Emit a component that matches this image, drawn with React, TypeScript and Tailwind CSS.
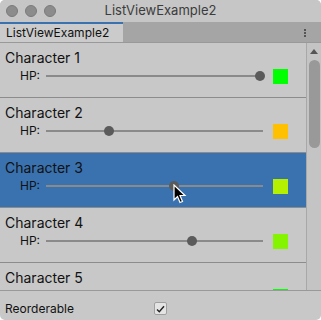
import React from "react";

type Character = {
  name: string;
  hp: number; // 0..1
  color: string;
};

const characters: Character[] = [
  { name: "Character 1", hp: 0.985, color: "#00ff00" },
  { name: "Character 2", hp: 0.29, color: "#ffc000" },
  { name: "Character 3", hp: 0.59, color: "#b4f000" },
  { name: "Character 4", hp: 0.675, color: "#84f400" },
  { name: "Character 5", hp: 1, color: "#00ff00" },
];

export default function App() {
  return (
    <div className="w-[321px] h-[320px] bg-white" style={{ fontFamily: "Inter, 'Noto Sans', sans-serif" }}>
      <div className="relative w-full h-full flex flex-col bg-[#c8c8c8] rounded-[5px] overflow-hidden text-[#111]">
        {/* Title bar */}
        <div className="relative h-[22px] flex items-center bg-[#c6c6c6] px-[6px] gap-[7px]">
          {[0, 1, 2].map((i) => (
            <span key={i} className="w-[12px] h-[12px] rounded-full bg-[#8c8c8c] border border-[#7a7a7a]" />
          ))}
          <span className="absolute inset-0 flex items-center justify-center text-[13px] text-[#3c3c3c]">
            ListViewExample2
          </span>
        </div>

        {/* Tab strip */}
        <div className="h-[21px] flex bg-[#a5a5a5] border-b border-[#999]">
          <div className="w-[123px] flex flex-col bg-[#cbcbcb]">
            <div className="h-[2px] bg-[#3a72b0]" />
            <div className="flex-1 flex items-center pl-[6px] text-[12px] text-[#111]">ListViewExample2</div>
          </div>
          <div className="flex-1" />
          <div className="w-[32px] flex flex-col items-center justify-center gap-[1px] pt-[2px]">
            <span className="w-[2px] h-[2px] bg-[#555]" />
            <span className="w-[2px] h-[2px] bg-[#555]" />
            <span className="w-[2px] h-[2px] bg-[#555]" />
          </div>
        </div>

        {/* List + scrollbar */}
        <div className="h-[248px] flex border-b border-[#999] overflow-hidden">
          <div className="flex-1 flex flex-col">
            {characters.map((c, i) => (
              <Row key={c.name} c={c} selected={i === 2} />
            ))}
          </div>
          <div className="w-[15px] flex flex-col items-center border-l border-[#a8a8a8] bg-[#c4c4c4]">
            <svg width="8" height="6" viewBox="0 0 8 6" className="mt-[6px]">
              <polygon points="4,0 8,5 0,5" fill="#555" />
            </svg>
            <div className="mt-[5px] w-[11px] h-[88px] rounded-full bg-[#999999]" />
          </div>
        </div>

        {/* Footer */}
        <div className="flex-1 flex items-center px-[5px] pt-[6px]">
          <span className="w-[149px] text-[12px] text-[#111]">Reorderable</span>
          <span className="w-[13px] h-[13px] rounded-[2px] bg-[#e4e4e4] border border-[#a0a0a0] flex items-center justify-center">
            <svg width="9" height="8" viewBox="0 0 9 8">
              <path d="M1 4.5 L3.3 6.7 L8 1.2" stroke="#222" strokeWidth="1.4" fill="none" />
            </svg>
          </span>
        </div>

        {/* Mouse cursor */}
        <svg width="14" height="20" viewBox="0 0 14 20" className="absolute left-[173px] top-[184px]">
          <path d="M1 1 L1 16 L4.5 12.5 L7 18.5 L9.5 17.5 L7 11.5 L12 11.5 Z" fill="#000" stroke="#fff" strokeWidth="1.2" />
        </svg>
      </div>
    </div>
  );
}

function Row({ c, selected }: { c: Character; selected: boolean }) {
  return (
    <div
      className={`h-[55px] shrink-0 flex flex-col pl-[5px] pt-[6px] border-b border-[#8c8c8c] ${
        selected ? "bg-[#3a72b0]" : "bg-[#c8c8c8]"
      }`}
    >
      <div className="text-[14px] leading-[17px] text-[#111]">{c.name}</div>
      <div className="flex items-center h-[16px] mt-[2px]">
        <span className="w-[41px] pl-[15px] text-[12px] text-[#111]">HP:</span>
        <div className="relative w-[217px] h-[2px] bg-[#8a8a8a]">
          <span
            className="absolute top-1/2 w-[10px] h-[10px] -ml-[5px] -mt-[5px] rounded-full bg-[#5b5b5b]"
            style={{ left: `${c.hp * 100}%` }}
          />
        </div>
        <span className="ml-[10px] w-[15px] h-[15px]" style={{ backgroundColor: c.color }} />
      </div>
    </div>
  );
}
